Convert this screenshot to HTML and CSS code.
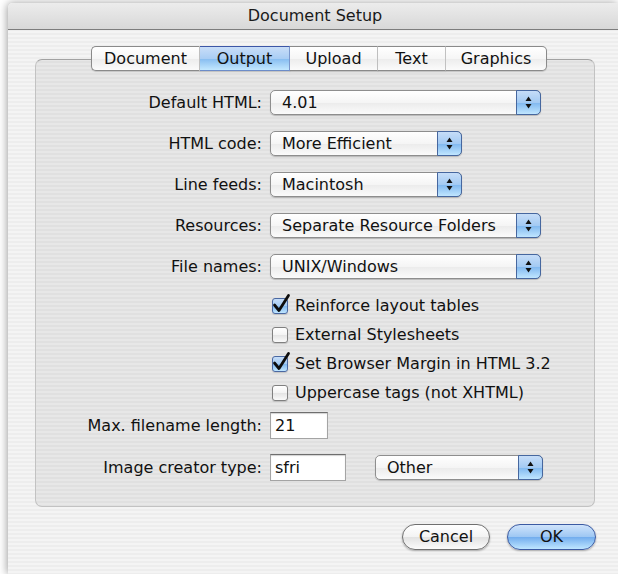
FILE: index.html
```html
<!DOCTYPE html>
<html lang="en">
<head>
<meta charset="utf-8">
<title>Document Setup</title>
<link rel="stylesheet" href="styles.css">
</head>
<body>
<div class="window">
  <div class="titlebar">Document Setup</div>
  <div class="content">
    <div class="tabs">
      <span class="tab tab-doc">Document</span>
      <span class="tab tab-out selected">Output</span>
      <span class="tab tab-up">Upload</span>
      <span class="tab tab-text">Text</span>
      <span class="tab tab-gfx">Graphics</span>
    </div>

    <div class="group">
      <div class="row popup-row">
        <span class="lbl">Default HTML:</span>
        <div class="popup long"><span class="val">4.01</span><span class="arrows"><svg viewBox="0 0 7 13" width="7" height="13"><polygon points="0.5,5 3.5,0.5 6.5,5"/><polygon points="0.5,8 6.5,8 3.5,12.5"/></svg></span></div>
      </div>
      <div class="row popup-row">
        <span class="lbl">HTML code:</span>
        <div class="popup short"><span class="val">More Efficient</span><span class="arrows"><svg viewBox="0 0 7 13" width="7" height="13"><polygon points="0.5,5 3.5,0.5 6.5,5"/><polygon points="0.5,8 6.5,8 3.5,12.5"/></svg></span></div>
      </div>
      <div class="row popup-row">
        <span class="lbl">Line feeds:</span>
        <div class="popup short"><span class="val">Macintosh</span><span class="arrows"><svg viewBox="0 0 7 13" width="7" height="13"><polygon points="0.5,5 3.5,0.5 6.5,5"/><polygon points="0.5,8 6.5,8 3.5,12.5"/></svg></span></div>
      </div>
      <div class="row popup-row">
        <span class="lbl">Resources:</span>
        <div class="popup long"><span class="val">Separate Resource Folders</span><span class="arrows"><svg viewBox="0 0 7 13" width="7" height="13"><polygon points="0.5,5 3.5,0.5 6.5,5"/><polygon points="0.5,8 6.5,8 3.5,12.5"/></svg></span></div>
      </div>
      <div class="row popup-row">
        <span class="lbl">File names:</span>
        <div class="popup long"><span class="val">UNIX/Windows</span><span class="arrows"><svg viewBox="0 0 7 13" width="7" height="13"><polygon points="0.5,5 3.5,0.5 6.5,5"/><polygon points="0.5,8 6.5,8 3.5,12.5"/></svg></span></div>
      </div>

      <div class="checks">
        <div class="check"><span class="cb on"><svg class="tick" viewBox="0 0 18 20" width="18" height="20"><path d="M2.5 11 L7 16.5 L16.5 1.5"/></svg></span>Reinforce layout tables</div>
        <div class="check"><span class="cb"></span>External Stylesheets</div>
        <div class="check"><span class="cb on"><svg class="tick" viewBox="0 0 18 20" width="18" height="20"><path d="M2.5 11 L7 16.5 L16.5 1.5"/></svg></span>Set Browser Margin in HTML 3.2</div>
        <div class="check"><span class="cb"></span>Uppercase tags (not XHTML)</div>
      </div>

      <div class="row field-row first-field">
        <span class="lbl">Max. filename length:</span>
        <span class="field narrow">21</span>
      </div>
      <div class="row field-row">
        <span class="lbl">Image creator type:</span>
        <span class="field medium">sfri</span>
        <div class="popup other"><span class="val">Other</span><span class="arrows"><svg viewBox="0 0 7 13" width="7" height="13"><polygon points="0.5,5 3.5,0.5 6.5,5"/><polygon points="0.5,8 6.5,8 3.5,12.5"/></svg></span></div>
      </div>
    </div>

    <div class="buttons">
      <span class="btn">Cancel</span>
      <span class="btn default">OK</span>
    </div>
  </div>
</div>
</body>
</html>
```

FILE: styles.css
```css
html, body {
  margin: 0;
  padding: 0;
  background: #ffffff;
  overflow: hidden;
  height: 574px;
}

body {
  font-family: "DejaVu Sans", "Liberation Sans", sans-serif;
  font-size: 16px;
  color: #111;
}

/* dialog window */
.window {
  margin: 3px 0 0 8px;
  width: 610px;
  height: 571px;
  border-radius: 5px 0 0 0;
  box-shadow: -1px 0 8px rgba(0, 0, 0, 0.38);
  overflow: hidden;
  background: repeating-linear-gradient(#f4f4f4 0 2px, #ededed 2px 4px);
}

.titlebar {
  height: 26px;
  line-height: 26px;
  padding-left: 4px;
  text-align: center;
  background: linear-gradient(#ececec, #d8d8d8);
  border-bottom: 1px solid #7d7d7d;
  color: #1a1a1a;
}

.content {
  display: flex;
  flex-direction: column;
}

/* segmented tab control */
.tabs {
  display: flex;
  margin: 16px 0 -12px 83px;
  height: 25px;
  position: relative;
  z-index: 1;
}

.tab {
  box-sizing: border-box;
  height: 25px;
  line-height: 24px;
  text-align: center;
  border-top: 1px solid #8a8a8a;
  border-bottom: 1px solid #8a8a8a;
  border-right: 1px solid #c4c4c4;
  background: linear-gradient(#ffffff, #f6f6f6 50%, #ececec 51%, #fbfbfb);
  box-shadow: 0 1px 1px rgba(0, 0, 0, 0.15);
}

.tab-doc {
  width: 109px;
  border-left: 1px solid #8a8a8a;
  border-radius: 5px 0 0 5px;
}
.tab-out { width: 90px; }
.tab-up { width: 88px; }
.tab-text { width: 68px; }
.tab-gfx {
  width: 101px;
  border-right: 1px solid #8a8a8a;
  border-radius: 0 5px 5px 0;
}

.tab.selected {
  border-top-color: #3c56a6;
  border-bottom-color: #6c8cc8;
  border-right-color: #7d9ad0;
  background: linear-gradient(#c9def8, #a9cdf4 50%, #86bcf0 51%, #c3e8ff);
}

/* group box */
.group {
  box-sizing: border-box;
  margin-left: 27px;
  width: 560px;
  height: 448px;
  padding: 30px 0 0 0;
  border: 1px solid #c2c2c2;
  border-top-color: #a2a2a2;
  border-radius: 7px;
  background: rgba(0, 0, 0, 0.05);
  display: flex;
  flex-direction: column;
}

.row {
  display: flex;
  align-items: center;
}

.lbl {
  width: 226px;
  margin-right: 8px;
  text-align: right;
  flex: none;
}

.popup-row {
  height: 25px;
  margin-bottom: 16px;
}
.popup-row:nth-child(5) {
  margin-bottom: 12px;
}

/* pop-up buttons */
.popup {
  box-sizing: border-box;
  display: flex;
  height: 25px;
  border: 1px solid #8e8e8e;
  border-radius: 5px;
  background: linear-gradient(#ffffff, #f5f5f5 50%, #ebebeb 51%, #fbfbfb);
  box-shadow: 0 1px 1px rgba(0, 0, 0, 0.2);
}
.popup.long { width: 271px; }
.popup.short { width: 192px; }
.popup.other { width: 168px; margin-left: 29px; }

.val {
  flex: 1;
  padding-left: 11px;
  line-height: 23px;
  white-space: nowrap;
}

.arrows {
  box-sizing: border-box;
  width: 25px;
  margin: -1px -1px -1px 0;
  border: 1px solid #46679f;
  border-radius: 0 5px 5px 0;
  background: linear-gradient(#c6ddf8, #a3caf3 50%, #7fb7ef 51%, #c0e6ff);
  display: flex;
  align-items: center;
  justify-content: center;
}
.arrows svg { fill: #111; }

/* checkboxes */
.checks {
  display: flex;
  flex-direction: column;
}

.check {
  height: 29px;
  display: flex;
  align-items: center;
  padding-left: 236px;
}

.cb {
  position: relative;
  box-sizing: border-box;
  width: 16px;
  height: 16px;
  margin-right: 7px;
  border: 1px solid #808080;
  border-radius: 3px;
  background: linear-gradient(#ffffff, #f3f3f3 50%, #e4e4e4 51%, #fafafa);
  box-shadow: 0 1px 1px rgba(0, 0, 0, 0.15);
}

.cb.on {
  border-color: #4a68a2;
  background: linear-gradient(#c6ddf8, #a3caf3 50%, #7fb7ef 51%, #c0e6ff);
}

.tick {
  position: absolute;
  left: -1px;
  top: -5px;
  overflow: visible;
}
.tick path {
  fill: none;
  stroke: #0d0d0d;
  stroke-width: 2.8;
  stroke-linecap: round;
  stroke-linejoin: round;
}

/* text fields */
.field-row {
  height: 27px;
  margin-top: 15px;
}
.field-row.first-field {
  margin-top: 5px;
}

.field {
  box-sizing: border-box;
  height: 27px;
  line-height: 25px;
  padding-left: 4px;
  background: #ffffff;
  border: 1px solid #a4a4a4;
  border-top-color: #6e6e6e;
  box-shadow: inset 0 1px 1px rgba(0, 0, 0, 0.18);
}
.field.narrow { width: 58px; }
.field.medium { width: 76px; }

/* push buttons */
.buttons {
  display: flex;
  justify-content: flex-end;
  gap: 17px;
  margin-top: 17px;
  padding-right: 22px;
}

.btn {
  box-sizing: border-box;
  height: 26px;
  line-height: 24px;
  text-align: center;
  border: 1px solid #6f6f6f;
  border-radius: 13px;
  background: linear-gradient(#ffffff, #f3f3f3 50%, #e2e2e2 51%, #fbfbfb);
  box-shadow: 0 1px 2px rgba(0, 0, 0, 0.3);
  width: 88px;
}

.btn.default {
  width: 89px;
  border-color: #3b5aa2;
  background: linear-gradient(#cfe3fb, #9dc7f3 50%, #72adee 51%, #bfe6ff);
}
```
